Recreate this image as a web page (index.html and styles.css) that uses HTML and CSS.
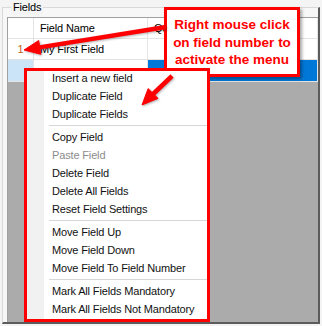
FILE: index.html
```html
<!DOCTYPE html>
<html>
<head>
<meta charset="utf-8">
<link rel="stylesheet" href="styles.css">
</head>
<body>
<div class="page">
  <div class="group">
    <span class="group-label">Fields</span>
    <div class="grid">
      <div class="cell rh"></div>
      <div class="cell hdr">Field Name</div>
      <div class="cell hdr">Question</div>
      <div class="cell rh num">1</div>
      <div class="cell">My First Field</div>
      <div class="cell"></div>
      <div class="cell rh rh-sel"></div>
      <div class="cell"></div>
      <div class="cell sel"></div>
      <div class="empty"></div>
    </div>
  </div>

  <div class="callout">Right mouse click<br>on field number to<br>activate the menu</div>

  <div class="menu">
    <div class="item">Insert a new field</div>
    <div class="item">Duplicate Field</div>
    <div class="item">Duplicate Fields</div>
    <div class="sep"></div>
    <div class="item">Copy Field</div>
    <div class="item disabled">Paste Field</div>
    <div class="item">Delete Field</div>
    <div class="item">Delete All Fields</div>
    <div class="item">Reset Field Settings</div>
    <div class="sep"></div>
    <div class="item">Move Field Up</div>
    <div class="item">Move Field Down</div>
    <div class="item">Move Field To Field Number</div>
    <div class="sep"></div>
    <div class="item">Mark All Fields Mandatory</div>
    <div class="item">Mark All Fields Not Mandatory</div>
  </div>

  <svg class="arrows" width="322" height="326" viewBox="0 0 322 326">
    <g fill="#ff0000" stroke="#ff0000" stroke-linejoin="round">
      <line x1="166" y1="27" x2="38" y2="47.6" stroke-width="4.5"/>
      <polygon points="24,50 38.7,40.5 40.9,54.3" stroke-width="1"/>
      <line x1="172" y1="76" x2="151" y2="96" stroke-width="4.5"/>
      <polygon points="142,105 148.1,88.6 158.1,98.4" stroke-width="1"/>
    </g>
  </svg>
</div>
</body>
</html>
```

FILE: styles.css
```css
* { box-sizing: border-box; }

html, body {
  margin: 0;
  padding: 0;
}

body {
  width: 322px;
  height: 326px;
  overflow: hidden;
  background: #f4f4f4;
  font-family: "Liberation Sans", Arial, sans-serif;
  font-size: 11px;
  letter-spacing: -0.15px;
  color: #000;
}

.page {
  position: relative;
  width: 322px;
  height: 326px;
  display: flex;
  flex-direction: column;
}

.group {
  position: relative;
  flex: 1;
  display: flex;
  flex-direction: column;
  margin: 7px 2px 2px 2px;
  padding: 9px 0 0 4px;
  border: 1px solid #d9d9d9;
  border-right: 2px solid #5c5c5c;
  border-bottom: 2px solid #5c5c5c;
  background: #f7f7f7;
}

.group-label {
  position: absolute;
  top: -8px;
  left: 8px;
  padding: 0 2px;
  line-height: 15px;
  background: #f4f4f4;
  color: #000;
}

.grid {
  flex: 1;
  display: grid;
  grid-template-columns: 26px 114px 1fr;
  grid-template-rows: 21px 21px 22px 1fr;
  border-left: 1px solid #a0a0a0;
  border-top: 1px solid #a0a0a0;
  background: #ababab;
}

.cell {
  background: #fff;
  border-right: 1px solid #e4e4e4;
  border-bottom: 1px solid #e4e4e4;
  padding-left: 6px;
  line-height: 20px;
  white-space: nowrap;
  overflow: hidden;
}

.rh {
  padding-left: 0;
  text-align: center;
}

.num {
  color: #c0661e;
}

.rh-sel {
  background: #cce4f7;
}

.sel {
  background: #0078d7;
}

.empty {
  grid-column: 1 / -1;
}

.callout {
  position: absolute;
  left: 164px;
  top: 7px;
  width: 136px;
  height: 70px;
  border: 3px solid #ff0000;
  background: #fff;
  box-shadow: 2px 2px 3px rgba(0, 0, 0, 0.35);
  padding-top: 6px;
  text-align: center;
  font-family: "Liberation Sans", Arial, sans-serif;
  font-weight: bold;
  font-size: 13.5px;
  letter-spacing: 0;
  line-height: 17.5px;
  color: #ff0000;
}

.menu {
  position: absolute;
  left: 24px;
  top: 68px;
  width: 186px;
  height: 254px;
  padding-top: 1px;
  background: linear-gradient(to right, #f1f1f1 0 20px, #fff 20px);
}

.menu::after {
  content: "";
  position: absolute;
  inset: 0;
  border: 3px solid #ff0000;
  pointer-events: none;
}

.item {
  height: 18px;
  line-height: 18px;
  padding-left: 28px;
  color: #111;
  white-space: nowrap;
}

.item.disabled {
  color: #8c8c8c;
}

.sep {
  height: 5px;
  margin: 0 3px 0 25px;
  background: linear-gradient(#d7d7d7, #d7d7d7) 0 2px / 100% 1px no-repeat;
}

.arrows {
  position: absolute;
  left: 0;
  top: 0;
  pointer-events: none;
  filter: drop-shadow(1px 1px 1px rgba(0, 0, 0, 0.3));
}
```
